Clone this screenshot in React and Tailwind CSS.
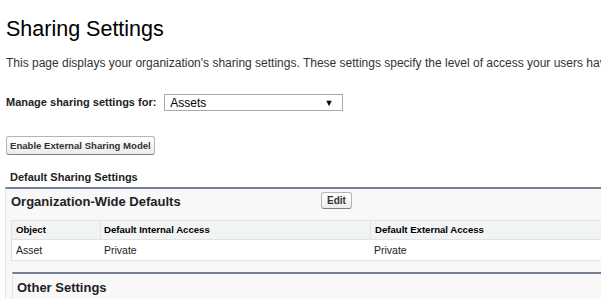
export default function App() {
  return (
    <div className="w-[601px] h-[299px] overflow-hidden bg-white font-['Liberation_Sans',Arial,sans-serif] text-[#333]">
      <div className="w-[1000px] pt-[17px]">
        <h1 className="ml-[6px] text-[21.5px] leading-[24px] text-black font-normal">Sharing Settings</h1>
        <p className="ml-[6px] mt-[15px] text-[12px] leading-[14px] whitespace-nowrap text-[#333]">
          This page displays your organization's sharing settings. These settings specify the level of access your users have to each other's data.
        </p>
        <div className="ml-[6px] mt-[24px] flex items-center h-[17px]">
          <span className="text-[11px] font-bold leading-[17px] text-[#222] whitespace-nowrap">Manage sharing settings for:</span>
          <div className="ml-[8px] w-[179px] h-[17px] border border-[#a9a9a9] bg-white flex items-center justify-between pl-[5px] pr-[9px]">
            <span className="text-[12px] leading-[14px] text-black">Assets</span>
            <span className="text-[9px] leading-[10px] text-black">▼</span>
          </div>
        </div>
        <div className="ml-[6px] mt-[25px] flex">
          <button className="h-[19px] px-[3px] border border-[#b5b5b5] border-b-[#7f7f7f] rounded-[3px] bg-gradient-to-b from-[#ffffff] to-[#ececec] text-[9.6px] font-bold leading-[17px] text-[#333] whitespace-nowrap">
            Enable External Sharing Model
          </button>
        </div>
        <div className="ml-[10px] mt-[16px] text-[11px] font-bold leading-[13px] text-[#222]">Default Sharing Settings</div>
        <div className="ml-[5px] mt-[3px] border-t-2 border-t-[#747e96] border-l border-l-[#e3e3e3] bg-[#f8f8f8] pb-[20px]">
          <div className="flex pt-[3px] h-[20px]">
            <div className="w-[315px] pl-[5px] pt-[1px] text-[13px] font-bold leading-[17px] text-[#222] whitespace-nowrap">Organization-Wide Defaults</div>
            <button className="h-[17px] w-[31px] border border-[#b5b5b5] border-b-[#7f7f7f] rounded-[3px] bg-gradient-to-b from-[#ffffff] to-[#ececec] text-[10px] font-bold leading-[15px] text-[#333]">
              Edit
            </button>
          </div>
          <div className="ml-[5px] mt-[11px] border-l border-l-[#e0e3e5]">
            <div className="flex bg-[#f2f3f3] border-t border-b border-[#e0e3e5] text-[9.6px] font-bold leading-[18px] text-black">
              <div className="w-[88px] pl-[4px]">Object</div>
              <div className="w-[270px] pl-[3px] border-l border-l-[#e0e3e5]">Default Internal Access</div>
              <div className="flex-1 pl-[4px] border-l border-l-[#e0e3e5]">Default External Access</div>
            </div>
            <div className="flex bg-white border-b border-[#e0e3e5] text-[10.5px] leading-[20px] text-[#222]">
              <div className="w-[88px] pl-[4px]">Asset</div>
              <div className="w-[270px] pl-[4px]">Private</div>
              <div className="flex-1 pl-[4px]">Private</div>
            </div>
          </div>
          <div className="ml-[6px] mt-[11px] border-t-2 border-t-[#747e96] border-l border-l-[#e3e3e3] bg-[#f8f8f8] h-[60px]">
            <div className="pl-[4px] pt-[5px] text-[13px] font-bold leading-[17px] text-[#222]">Other Settings</div>
          </div>
        </div>
      </div>
    </div>
  );
}
